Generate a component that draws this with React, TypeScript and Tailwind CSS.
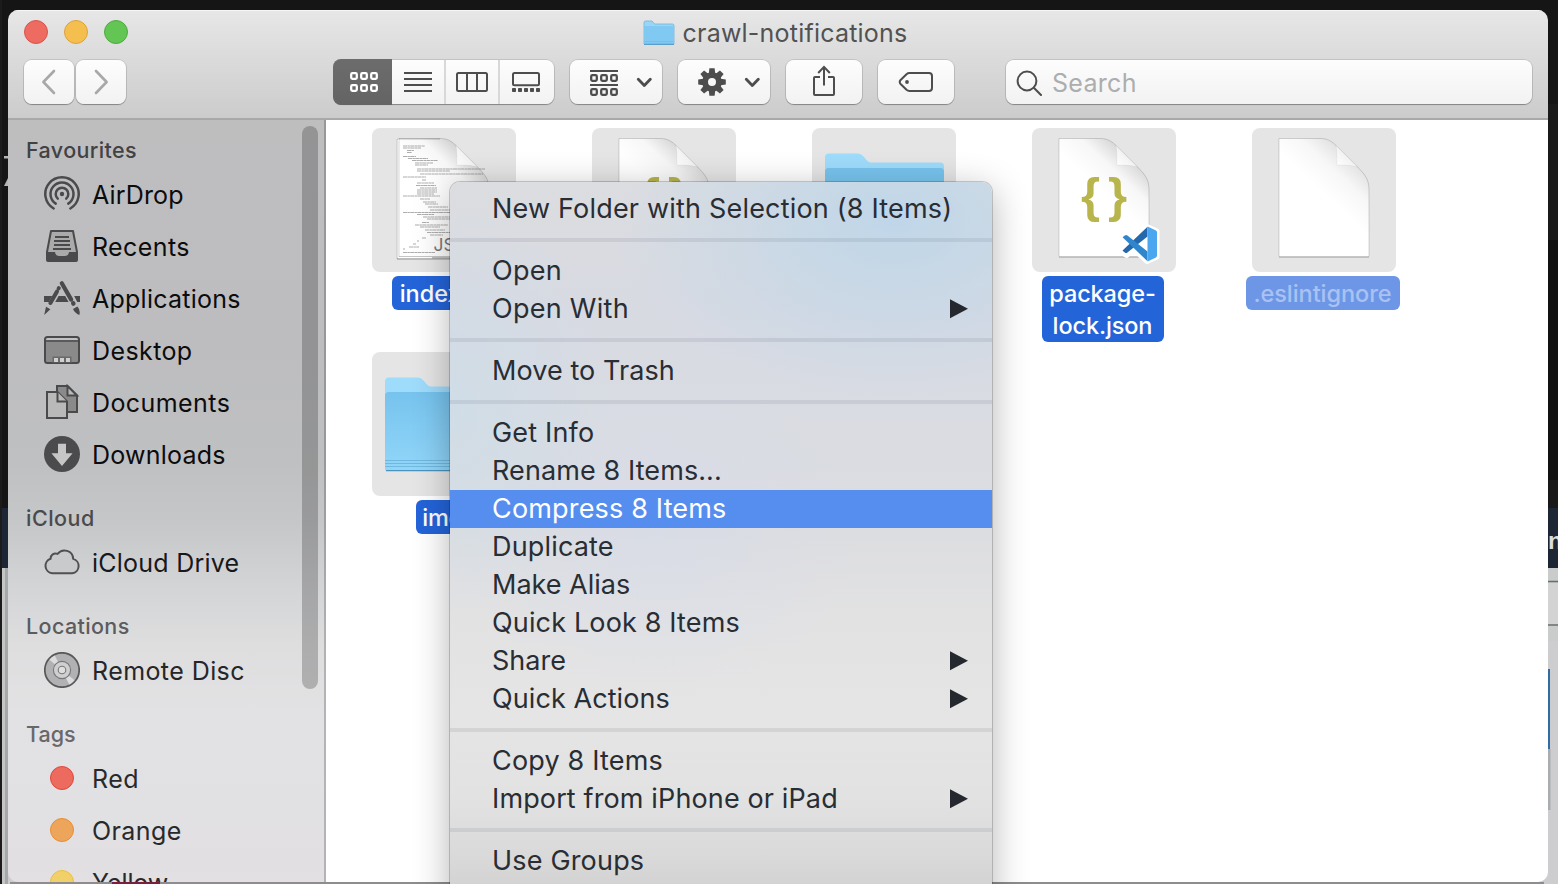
import React from "react";

const INK = "#4a4a4c";

/* ---------- toolbar icons ---------- */

function Squares({ x, y, color }: { x: number; y: number; color: string }) {
  return (
    <g fill="none" stroke={color} strokeWidth="2.3">
      {[0, 10, 20].map((dx) => (
        <rect key={dx} x={x + dx + 1.2} y={y + 1.2} width="5.6" height="5.6" rx="1.2" />
      ))}
    </g>
  );
}

function IconGrid() {
  return (
    <svg className="h-7 w-7" viewBox="0 0 28 28">
      <Squares x={0} y={4} color="#fff" />
      <Squares x={0} y={16} color="#fff" />
    </svg>
  );
}

function IconList() {
  return (
    <svg className="h-7 w-7" viewBox="0 0 28 28" stroke="#4d4d4d" strokeWidth="2">
      <path d="M0 5H28M0 11H28M0 17H28M0 23H28" />
    </svg>
  );
}

function IconColumns() {
  return (
    <svg className="h-7 w-8" viewBox="0 0 32 28" fill="none" stroke="#4d4d4d" strokeWidth="2">
      <rect x="1" y="5" width="30" height="18" rx="1.5" />
      <path d="M11 5V23M21 5V23" />
    </svg>
  );
}

function IconGallery() {
  return (
    <svg className="h-7 w-7" viewBox="0 0 28 28">
      <rect x="1" y="5" width="26" height="12.2" rx="1.5" fill="none" stroke="#4d4d4d" strokeWidth="2" />
      {[0, 6, 12, 18, 24].map((x) => (
        <rect key={x} x={x} y="20" width="4" height="4" rx="0.8" fill="#4d4d4d" />
      ))}
    </svg>
  );
}

function IconGroup() {
  return (
    <svg className="h-7 w-7" viewBox="0 0 28 28">
      <path d="M0 3H28M0 17H28" stroke="#4d4d4d" strokeWidth="2" />
      <Squares x={0} y={6} color="#4d4d4d" />
      <Squares x={0} y={20} color="#4d4d4d" />
    </svg>
  );
}

function Caret() {
  return (
    <svg className="h-3 w-4" viewBox="0 0 16 12" fill="none" stroke="#4d4d4d" strokeWidth="2.8" strokeLinecap="round" strokeLinejoin="round">
      <path d="M2.300 3.200L8.300 9.500L14.300 3.200" />
    </svg>
  );
}

function IconGear() {
  return (
    <svg className="h-7 w-7" viewBox="-14 -14 28 28">
      <g fill="#4d4d4d">
        {[0, 45, 90, 135, 180, 225, 270, 315].map((a) => (
          <path key={a} d="M-2.6 -13.8H2.6L3.4 -7H-3.4Z" transform={`rotate(${a})`} />
        ))}
      </g>
      <circle r="6.9" fill="none" stroke="#4d4d4d" strokeWidth="5.8" />
    </svg>
  );
}

function IconShare() {
  return (
    <svg className="h-8 w-6" viewBox="0 0 24 32" fill="none" stroke="#4d4d4d" strokeWidth="2">
      <path d="M8 12H3Q2 12 2 13V29Q2 30 3 30H21Q22 30 22 29V13Q22 12 21 12H16" />
      <path d="M12 20.5V2.5M6.2 8L12 1.9L17.8 8" />
    </svg>
  );
}

function IconTag() {
  return (
    <svg className="h-6 w-9" viewBox="0 0 36 24" fill="none" stroke="#4d4d4d" strokeWidth="2">
      <path d="M11.5 3H31Q34 3 34 6V18Q34 21 31 21H11.5Q9.8 21 8.5 19.8L2.6 14Q0.8 12 2.6 10L8.5 4.2Q9.8 3 11.5 3Z" />
      <circle cx="9" cy="12" r="1.9" fill="#4d4d4d" stroke="none" />
    </svg>
  );
}

function IconSearch() {
  return (
    <svg className="h-7 w-7" viewBox="0 0 28 28" fill="none" stroke="#4d4d4d" strokeWidth="2" strokeLinecap="round">
      <circle cx="12" cy="13" r="9.4" />
      <path d="M18.8 19.8L26 27" />
    </svg>
  );
}

/* ---------- sidebar icons ---------- */

function arc(r: number, deg: number) {
  const a = (deg * Math.PI) / 180;
  const dx = r * Math.sin(a);
  const dy = r * Math.cos(a);
  return `M${18 - dx} ${18 + dy}A${r} ${r} 0 1 1 ${18 + dx} ${18 + dy}`;
}

function AirDrop() {
  return (
    <g fill="none" stroke={INK} strokeWidth="2.5" strokeLinecap="round">
      <path d={arc(16.7, 30)} />
      <path d={arc(11.5, 33)} />
      <path d={arc(6.3, 42)} />
      <circle cx="18" cy="18" r="2.2" fill={INK} stroke="none" />
    </g>
  );
}

function Recents() {
  return (
    <g>
      <path d="M7 3H29L33 24V32Q33 33 32 33H4Q3 33 3 32V24Z" fill="#aaaaab" stroke={INK} strokeWidth="2" strokeLinejoin="round" />
      <path d="M11 9H25M10 13H26M10 17H26M9 21H27" stroke={INK} strokeWidth="1.8" />
      <path d="M3 24H11Q11.5 28 15 28H21Q24.5 28 25 24H33V33H3Z" fill={INK} />
    </g>
  );
}

function Applications() {
  return (
    <g fill={INK}>
      <path d="M0 16H8.2L4.9 22H0ZM36 16H30.2L33.2 22H36ZM11.2 22L14.6 16H21.2L24.6 22Z" />
      <g stroke={INK} strokeLinecap="round">
        <path d="M17.8 3.2L27.2 19.6" strokeWidth="4.2" />
        <path d="M29.2 23.2L29.4 23.6" strokeWidth="4.4" />
        <path d="M13 11.6L6.4 23" strokeWidth="4" />
        <path d="M14.8 8.2L14.6 8.5" strokeWidth="4" />
      </g>
      <path d="M2 26.8L6.400 29.2L0.2 35Z" />
      <path d="M29 29L33.4 26.4Q36.6 29.8 35.4 35Q30.8 33.2 29 29Z" />
    </g>
  );
}

function Desktop() {
  return (
    <g>
      <rect x="1" y="5" width="34" height="26" rx="2.5" fill="#8a8a8b" stroke={INK} strokeWidth="2" />
      <path d="M2 8Q2 6 4 6H32Q34 6 34 8Z" fill="#c2c2c3" />
      <path d="M1 9H35" stroke={INK} strokeWidth="1.6" />
      <rect x="8.5" y="24.5" width="19" height="6" fill="#6a6a6b" />
      <path d="M10 26H14V30H10ZM16 26H20V30H16ZM22 26H26V30H22Z" fill="#d0d0d1" />
    </g>
  );
}

function Documents() {
  return (
    <g stroke={INK} strokeWidth="2">
      <path d="M13 2H23.5L33 11.5V28H13Z" fill="#8a8a8b" />
      <path d="M23.5 2V11.5H33Z" fill="#b9b9ba" />
      <path d="M3 8H13.5L23 17.5V34H3Z" fill="#b9b9ba" />
      <path d="M13.5 8V17.5H23" fill="#b9b9ba" />
    </g>
  );
}

function Downloads() {
  return (
    <g>
      <circle cx="18" cy="18" r="18" fill="#4b4b4d" />
      <path d="M14 7.8H22V17.3H28.6L18 30L7.4 17.3H14Z" fill="#c6c6c7" />
    </g>
  );
}

function Cloud() {
  return (
    <path
      d="M8.2 29.2A7.4 7.4 0 0 1 6.6 14.8A5 5 0 0 1 13.6 9.900A8.7 8.7 0 0 1 29.2 14.9A7.300 7.300 0 0 1 28.2 29.2Z"
      fill="#c9cacb"
      stroke="#505052"
      strokeWidth="2"
      strokeLinejoin="round"
    />
  );
}

function Disc() {
  return (
    <g>
      <circle cx="18" cy="18" r="17.2" fill="#b1b1b3" stroke="#58585a" strokeWidth="1.7" />
      <path d="M18 18L5.4 7.8Q7.6 5 10.8 3.6ZM18 18L30.6 28.2Q28.4 31 25.2 32.4Z" fill="#dcdcdd" />
      <circle cx="18" cy="18" r="8.6" fill="#cfcfd0" stroke="#77777a" strokeWidth="1.1" />
      <circle cx="18" cy="18" r="3.8" fill="#dededf" stroke="#77777a" strokeWidth="1.1" />
    </g>
  );
}

/* ---------- sidebar ---------- */

type Place = { label: string; Icon: () => React.ReactElement; spacing: string };

const favourites: Place[] = [
  { label: "AirDrop", Icon: AirDrop, spacing: "tracking-[0.15px]" },
  { label: "Recents", Icon: Recents, spacing: "tracking-[0.4px]" },
  { label: "Applications", Icon: Applications, spacing: "tracking-[0.25px]" },
  { label: "Desktop", Icon: Desktop, spacing: "tracking-[0.4px]" },
  { label: "Documents", Icon: Documents, spacing: "tracking-[0.42px]" },
  { label: "Downloads", Icon: Downloads, spacing: "tracking-[0.24px]" },
];
const cloud: Place[] = [{ label: "iCloud Drive", Icon: Cloud, spacing: "tracking-[0.24px]" }];
const locations: Place[] = [{ label: "Remote Disc", Icon: Disc, spacing: "tracking-[0.42px]" }];
const tags = [
  { label: "Red", dot: "bg-[#ec6a5e] border-[#e2463a]", spacing: "tracking-[0.5px]" },
  { label: "Orange", dot: "bg-[#eda45b] border-[#e88f33]", spacing: "tracking-[0.4px]" },
  { label: "Yellow", dot: "bg-[#f1d06a] border-[#ebc03f]", spacing: "tracking-[-0.1px]" },
];

function Heading({ children, first, tone }: { children: string; first?: boolean; tone: string }) {
  return (
    <h2 className={`${first ? "h-12" : "h-14"} ${tone} flex shrink-0 items-end pb-1 pl-[18px] text-[21.5px] leading-7 font-medium`}>
      {children}
    </h2>
  );
}

function Places({ items }: { items: Place[] }) {
  return (
    <ul>
      {items.map(({ label, Icon, spacing }) => (
        <li key={label} className="flex h-[52px] items-center gap-3 pl-9">
          <svg className="h-9 w-9 shrink-0" viewBox="0 0 36 36">
            <Icon />
          </svg>
          <span className={`pt-0.5 text-[25px] leading-8 whitespace-nowrap ${spacing}`}>{label}</span>
        </li>
      ))}
    </ul>
  );
}

function Sidebar() {
  return (
    <nav className="relative flex w-[318px] shrink-0 flex-col overflow-hidden border-r-2 border-black/20 bg-[linear-gradient(180deg,#bebebf_0%,#bdbdbf_30%,#bfc0c1_45%,#c6c7c9_53%,#d3d4d6_61%,#dededf_69%,#e2e1e3_78%,#e1e0e2_92%,#e3dfe2_100%)] bg-origin-border text-[#0c0c0d]">
      <Heading first tone="text-[#424244] tracking-[0.38px]">Favourites</Heading>
      <Places items={favourites} />
      <Heading tone="text-[#4a4a4d] tracking-[0.5px]">iCloud</Heading>
      <div className="text-[#18181a]"><Places items={cloud} /></div>
      <Heading tone="text-[#5c5c5f] tracking-[0.38px]">Locations</Heading>
      <div className="text-[#262628]"><Places items={locations} /></div>
      <Heading tone="text-[#68686b] tracking-[0px]">Tags</Heading>
      <ul className="text-[#29292b]">
        {tags.map((t) => (
          <li key={t.label} className="flex h-[52px] items-center gap-[18px] pl-[42px]">
            <span className={`h-6 w-6 rounded-full border-[1.5px] ${t.dot}`} />
            <span className={`pt-0.5 text-[25px] leading-8 ${t.spacing}`}>{t.label}</span>
          </li>
        ))}
      </ul>
      <div className="absolute top-[6px] right-[6px] h-[563px] w-4 rounded-full bg-black/22" />
    </nav>
  );
}

/* ---------- toolbar ---------- */

const button =
  "flex h-[44px] shrink-0 items-center rounded-[8px] bg-linear-to-b from-[#fdfdfd] to-[#f2f2f2] shadow-[0_0_0_1px_rgba(0,0,0,0.11),0_1px_1px_rgba(0,0,0,0.28)]";

function MiniFolder() {
  return (
    <svg className="h-[26px] w-8" viewBox="0 0 32 26">
      <path d="M1 2.5Q1 1 2.5 1H9L11.5 4H29.5Q31 4 31 5.5V24H1Z" fill="#9bd5f5" stroke="#6fb4dc" strokeWidth="0.8" />
      <path d="M1.2 6H30.8V23.8H1.2Z" fill="#80c9f3" />
      <path d="M1 24.3H31" stroke="#5a9fca" strokeWidth="1.2" />
      <path d="M1.4 21.5H30.6" stroke="#6db9e6" strokeWidth="0.6" />
    </svg>
  );
}

function Toolbar() {
  return (
    <header className="flex h-[110px] shrink-0 flex-col border-b-2 border-[#a9a9a9] bg-linear-to-b from-[#e7e7e7] to-[#cccccc] shadow-[inset_0_1px_0_#f6f6f6]">
      <div className="grid h-[46px] grid-cols-[1fr_auto_1fr] items-center">
        <div className="flex gap-4 pb-0.5 pl-4">
          <span className="h-6 w-6 rounded-full border border-[#d9544b] bg-[#ed6b60]" />
          <span className="h-6 w-6 rounded-full border border-[#dea13a] bg-[#f5bf4f]" />
          <span className="h-6 w-6 rounded-full border border-[#4fab3f] bg-[#62c554]" />
        </div>
        <div className="flex items-center gap-2 pr-[6px] pb-px">
          <MiniFolder />
          <h1 className="text-[25px] leading-8 tracking-[0.22px] text-[#525252]">crawl-notifications</h1>
        </div>
      </div>
      <div className="flex pt-1 pl-4">
        <div className={`${button} w-[50px] justify-center`}>
          <svg className="h-7 w-4" viewBox="0 0 16 28" fill="none" stroke="#a8a8a8" strokeWidth="2.6" strokeLinecap="round" strokeLinejoin="round">
            <path d="M13 3L2.4 14L13 25" />
          </svg>
        </div>
        <div className={`${button} ml-0.5 w-[50px] justify-center`}>
          <svg className="h-7 w-4" viewBox="0 0 16 28" fill="none" stroke="#a8a8a8" strokeWidth="2.6" strokeLinecap="round" strokeLinejoin="round">
            <path d="M3 3L13.6 14L3 25" />
          </svg>
        </div>
        <div className={`${button} ml-[208px] w-[220px]`}>
          <div className="-my-px -ml-px flex h-[46px] w-[59px] items-center justify-center rounded-l-[8px] bg-linear-to-b from-[#6c6c6c] to-[#646464] pl-[3px]">
            <IconGrid />
          </div>
          <div className="flex h-full w-[54px] items-center justify-center border-r-2 border-[#d8d8d8]"><IconList /></div>
          <div className="flex h-full w-[54px] items-center justify-center border-r-2 border-[#d8d8d8]"><IconColumns /></div>
          <div className="flex flex-1 items-center justify-center pr-0.5"><IconGallery /></div>
        </div>
        <div className={`${button} ml-4 w-[92px] gap-[18px] pl-5`}>
          <IconGroup />
          <Caret />
        </div>
        <div className={`${button} ml-4 w-[92px] gap-[18px] pl-5`}>
          <IconGear />
          <Caret />
        </div>
        <div className={`${button} ml-4 w-[76px] justify-center pb-[2px]`}><IconShare /></div>
        <div className={`${button} ml-4 w-[76px] justify-center`}><IconTag /></div>
        <div className={`${button} ml-[52px] w-[526px] gap-[9px] pl-[9px]`}>
          <IconSearch />
          <span className="pt-0.5 text-[25px] leading-8 tracking-[0.3px] text-[#adadad]">Search</span>
        </div>
      </div>
    </header>
  );
}

/* ---------- file icons ---------- */

function Sheet({ id, shade, children }: { id: string; shade: string; children?: React.ReactNode }) {
  return (
    <svg className="h-36 w-36" viewBox="0 0 144 144">
      <defs>
        <linearGradient id={`${id}-curl`} gradientUnits="userSpaceOnUse" x1="96" y1="28" x2="66" y2="60">
          <stop offset="0" stopColor={shade} />
          <stop offset="0.45" stopColor="#f7f7f7" />
          <stop offset="1" stopColor="#fff" />
        </linearGradient>
        <linearGradient id={`${id}-fold`} gradientUnits="userSpaceOnUse" x1="84" y1="38" x2="95" y2="27">
          <stop offset="0" stopColor="#fff" />
          <stop offset="1" stopColor="#f1f1f1" />
        </linearGradient>
      </defs>
      <path d="M27 129.3H117" stroke="#000" strokeOpacity="0.16" strokeWidth="1.6" />
      <path
        d="M27 10.5H68C76 10.5 80 13.5 85 18.5L104.5 38C113 46.5 117 51 117 62V128.5H27Z"
        fill={`url(#${id}-curl)`}
        stroke="#000"
        strokeOpacity="0.15"
        strokeWidth="1"
      />
      {children}
      <path d="M84 17.5C85 24 85 30 84.8 37C92 37 100 37.2 105.5 39Z" fill={`url(#${id}-fold)`} stroke="#000" strokeOpacity="0.08" strokeWidth="0.6" />
    </svg>
  );
}

function Braces() {
  return (
    <g fill="#b8b54c" fontFamily="Liberation Sans" fontWeight="bold" fontSize="49">
      <text x="49" y="84">{"{"}</text>
      <text x="76" y="84">{"}"}</text>
    </g>
  );
}

function EditorBadge() {
  return (
    <g transform="translate(90 98)">
      <path d="M25 0.5L35 5V31L25 35.5L12 23.6L4.5 29.5L0.5 27L0.5 9L4.5 6.5L12 12.4Z" fill="#fff" stroke="#fff" strokeWidth="5" strokeLinejoin="round" />
      <path d="M0.8 24.2L25.5 0.8V10.5L5.4 26.6Q4 27.6 2.8 26.6L0.9 25Q0.4 24.6 0.8 24.2Z" fill="#2469ad" />
      <path d="M0.8 11.6L25.5 35.2V25.5L5.4 9.4Q4 8.4 2.8 9.4L0.9 11Q0.4 11.3 0.8 11.6Z" fill="#2f86cd" />
      <path d="M25.5 0.6L34 4.6Q35 5.2 35 6.4V29.6Q35 30.8 34 31.4L25.5 35.4Z" fill="#4aa6ee" />
    </g>
  );
}

/* x, y, width of each line of the page preview */
const previewLines = [
  [31, 18, 22], [31, 20, 18], [35, 22.5, 7], [35, 24.5, 5], [31, 28.5, 13], [36, 30.5, 20], [40, 32.5, 26], [43, 35, 18],
  [43, 37, 13], [45, 41, 68], [45, 43, 33], [48, 46, 63], [31, 49, 23], [50, 52, 4], [45, 55, 17], [44, 57.5, 20],
  [48, 60, 17], [45, 62, 20], [45, 64, 20], [45, 66, 17], [31, 68, 37], [48, 71, 10], [51, 74, 13], [53, 76, 13],
  [56, 79, 20], [58, 82, 20], [31, 84.5, 47], [45, 86.5, 17], [51, 89, 27], [55, 91, 23], [50, 94.5, 7], [43, 97, 33],
  [48, 99, 20], [53, 102, 20], [55, 104.5, 23], [58, 107, 13], [50, 110, 4], [45, 113, 2], [41, 116, 3], [37, 119, 10],
  [31, 121, 2], [31, 124.5, 32],
];

function CodePreview() {
  return (
    <g>
      <path d="M27 11.5H25.500V130H60" fill="none" stroke="#fff" strokeWidth="2" />
      <path d="M25 131V11H68" fill="none" stroke="#000" strokeOpacity="0.3" strokeWidth="0.8" />
      <path d="M25 130.8H117" stroke="#000" strokeOpacity="0.35" strokeWidth="1.2" />
      <g stroke="#777" strokeOpacity="0.75" strokeWidth="0.8" strokeDasharray="4 0.4 2.5 0.3">
        {previewLines.map(([x, y, w]) => (
          <path key={`${x}-${y}`} d={`M${x} ${y}h${w}`} />
        ))}
      </g>
      <text x="61.500" y="123" fontFamily="Inter" fontSize="17.5" fill="#7a7a7a">JS</text>
    </g>
  );
}

function FolderArt({ id }: { id: string }) {
  return (
    <svg className="h-36 w-36" viewBox="0 0 144 144">
      <defs>
        <linearGradient id={id} x1="0" y1="0" x2="0" y2="1">
          <stop offset="0" stopColor="#76c3ee" />
          <stop offset="1" stopColor="#92d6f9" />
        </linearGradient>
      </defs>
      <path d="M13 29.500Q13 25.500 17 25.500H46Q49 25.500 51 28L55 32.400Q56.500 34.400 59 34.400H128Q132 34.400 132 38V60H13Z" fill="#9fdbfb" />
      <path d="M13 43.500Q13 40 16.500 40H128.500Q132 40 132 43.500V117Q132 119 130 119H15Q13 119 13 117Z" fill={`url(#${id})`} />
      <path d="M13 108.500H132M13 111.500H132M13 114.500H132" stroke="#67b1d9" strokeWidth="0.8" />
      <path d="M14 118.600H131" stroke="#4c93bd" strokeWidth="1.2" />
    </svg>
  );
}

/* ---------- file grid ---------- */

function Item({ art, children, label }: { art: React.ReactNode; children?: React.ReactNode; label?: string }) {
  return (
    <div className="flex h-[224px] flex-col items-center">
      <div className="h-36 w-36 overflow-hidden rounded-[8px] bg-[#e5e5e5]">{art}</div>
      {children && (
        <div className={`mt-1 rounded-[6px] pt-0.5 text-center text-[23.5px] leading-8 font-medium ${label}`}>
          {children}
        </div>
      )}
    </div>
  );
}

function Files() {
  return (
    <main className="grid flex-1 auto-rows-[224px] grid-cols-[repeat(5,220px)] bg-white pt-2 pl-2">
      <Item art={<Sheet id="js" shade="#d2d2d2"><CodePreview /></Sheet>} label="w-[104px] bg-[#2464d9] pr-0.5 text-white">
        index.js
      </Item>
      <Item art={<Sheet id="json" shade="#d8d8d8"><Braces /></Sheet>} />
      <Item art={<FolderArt id="folder-a" />} />
      <Item
        art={<Sheet id="lock" shade="#d8d8d8"><Braces /><EditorBadge /></Sheet>}
        label="w-[122px] bg-[#2464d9] text-white tracking-[-0.12px] mr-[2px] pr-px"
      >
        package-<br />lock.json
      </Item>
      <Item art={<Sheet id="ignore" shade="#e2e2e2" />} label="w-[154px] bg-[#6d97e6] text-[#a9c2f2] tracking-[-0.06px] mr-[2px] pr-px">
        .eslintignore
      </Item>
      <Item art={<FolderArt id="folder-b" />} label="w-[56px] bg-[#2464d9] pr-[3px] text-white tracking-[-0.3px]">
        img
      </Item>
    </main>
  );
}

/* ---------- context menu ---------- */

type Entry = { label: string; spacing: string; submenu?: boolean; active?: boolean };

const groups: Entry[][] = [
  [{ label: "New Folder with Selection (8 Items)", spacing: "tracking-[0.19px]" }],
  [
    { label: "Open", spacing: "tracking-[0.3px]" },
    { label: "Open With", spacing: "tracking-[0.28px]", submenu: true },
  ],
  [{ label: "Move to Trash", spacing: "tracking-[0.08px]" }],
  [
    { label: "Get Info", spacing: "tracking-[0.18px]" },
    { label: "Rename 8 Items...", spacing: "tracking-[0.09px]" },
    { label: "Compress 8 Items", spacing: "tracking-[0.17px]", active: true },
    { label: "Duplicate", spacing: "tracking-[0.17px]" },
    { label: "Make Alias", spacing: "tracking-[0px]" },
    { label: "Quick Look 8 Items", spacing: "tracking-[0.15px]" },
    { label: "Share", spacing: "tracking-[0px]", submenu: true },
    { label: "Quick Actions", spacing: "tracking-[0.08px]", submenu: true },
  ],
  [
    { label: "Copy 8 Items", spacing: "tracking-[0.18px]" },
    { label: "Import from iPhone or iPad", spacing: "tracking-[0.13px]", submenu: true },
  ],
  [{ label: "Use Groups", spacing: "tracking-[0.18px]" }],
];

function ContextMenu() {
  return (
    <div className="absolute top-[182px] left-[450px] h-[760px] w-[542px] rounded-[10px] bg-[radial-gradient(ellipse_280px_180px_at_82%_5%,rgba(190,214,233,0.95),rgba(190,214,233,0)),radial-gradient(ellipse_160px_200px_at_0%_30%,rgba(205,221,232,0.8),rgba(205,221,232,0)),radial-gradient(ellipse_200px_160px_at_38%_46%,rgba(213,219,236,0.5),rgba(213,219,236,0)),linear-gradient(180deg,#dcdde0_0%,#d8dae2_16%,#dadce2_32%,#dcdde0_46%,#e2e2e3_57%,#e5e5e5_70%,#e2e2e2_81%,#d9d9d9_89%,#d2d2d2_93%)] pt-2 text-[#292d34] shadow-[0_0_0_1px_rgba(0,0,0,0.18),0_8px_36px_rgba(0,0,0,0.3)]">
      {groups.map((group, i) => (
        <React.Fragment key={i}>
          {i > 0 && <hr className="my-[10px] h-1 border-0 bg-[#3c4655]/10" />}
          {group.map((e) => (
            <div
              key={e.label}
              className={`flex h-[38px] items-center justify-between pr-6 pl-[42px] ${e.active ? "bg-[#568eef] text-white" : ""}`}
            >
              <span className={`pb-px text-[27px] leading-9 whitespace-nowrap ${e.spacing}`}>{e.label}</span>
              {e.submenu && (
                <svg className="mb-px h-5 w-[18px]" viewBox="0 0 18 20" fill="#25282e">
                  <path d="M0 0.300L18 9.800L0 19.300Z" />
                </svg>
              )}
            </div>
          ))}
        </React.Fragment>
      ))}
    </div>
  );
}

/* ---------- what shows around the window ---------- */

function Backdrop() {
  return (
    <svg className="absolute inset-0 h-full w-full" viewBox="0 0 1558 884">
      <rect width="1558" height="884" fill="#151515" />
      <rect y="0" width="2" height="884" fill="#1b1b1b" />
      <path d="M4 156H8V158.500H4ZM4 186L8 178V186Z" fill="#b5b5b5" />
      <rect x="1548" y="104" width="10" height="136" fill="#1a1a1a" />
      <rect x="1548" y="240" width="10" height="240" fill="#111" />
      <rect x="1548" y="480" width="10" height="28" fill="#191919" />
      <rect x="2" y="508" width="1556" height="60" fill="#1d2634" />
      <rect x="2" y="568" width="1556" height="316" fill="#cdcccf" />
      <rect x="2" y="568" width="6" height="316" fill="#a6a9a9" />
      <rect x="2" y="568" width="3" height="316" fill="#c4c6c6" />
      <text x="1548" y="549" fontFamily="Liberation Sans" fontWeight="bold" fontSize="24" fill="#dcdcdc">n</text>
      <rect x="1548" y="568" width="10" height="73" fill="#c9cccb" />
      <rect x="1548" y="583" width="10" height="41" fill="#d3d3d4" />
      <path d="M1548 581.500H1558M1548 625H1558" stroke="#6c6c6f" strokeWidth="1.6" />
      <rect x="1548" y="669" width="2" height="80" fill="#2f6ca4" />
      <rect x="1548" y="749" width="2.500" height="61" fill="#a9adaf" />
      <rect x="10" y="882" width="1534" height="2" fill="#8d8d8f" />
      <rect x="112" y="882" width="48" height="2" fill="#7a1f3f" />
    </svg>
  );
}

export default function App() {
  return (
    <div className="relative h-[884px] w-[1558px] overflow-hidden pt-[10px] pl-2 font-['Inter',sans-serif]">
      <Backdrop />
      <div className="relative flex h-[872px] w-[1540px] flex-col overflow-hidden rounded-[10px]">
        <Toolbar />
        <div className="flex min-h-0 flex-1">
          <Sidebar />
          <Files />
        </div>
      </div>
      <ContextMenu />
    </div>
  );
}
